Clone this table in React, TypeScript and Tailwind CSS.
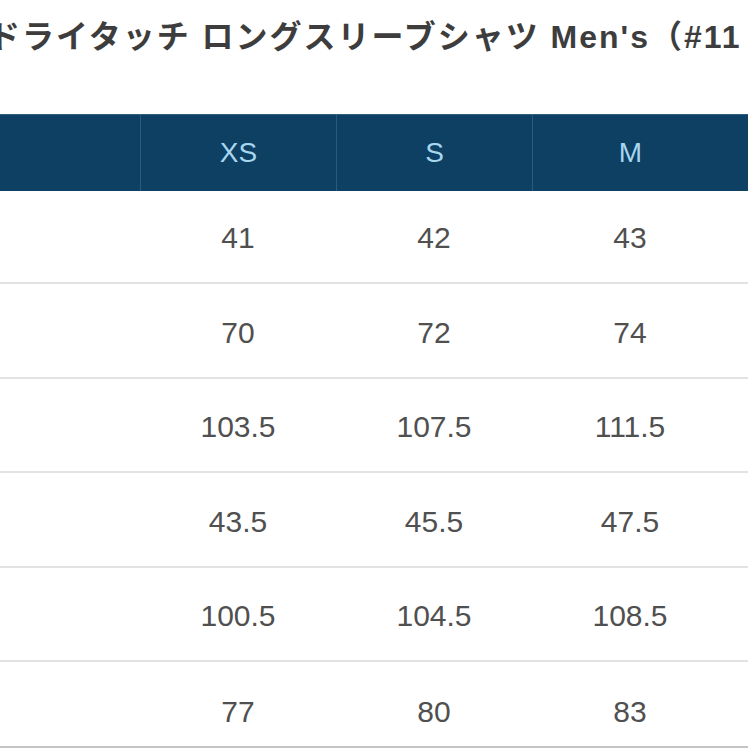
const sizes = ['', 'XS', 'S', 'M', ''];

const rows = [
  ['', '41', '42', '43', ''],
  ['', '70', '72', '74', ''],
  ['', '103.5', '107.5', '111.5', ''],
  ['', '43.5', '45.5', '47.5', ''],
  ['', '100.5', '104.5', '108.5', ''],
  ['', '77', '80', '83', ''],
];

export default function App() {
  return (
    <div className="w-[748px] h-[748px] overflow-hidden bg-white">
      {/* Title */}
      <div className="h-[114px] pt-[18px] overflow-hidden">
        <h1
          className="ml-[-12px] whitespace-nowrap text-[32px] leading-[38px] font-bold tracking-[2px] text-[#3d3d3d]"
          style={{ fontFamily: '"Liberation Sans", "Noto Sans CJK JP", sans-serif' }}
        >
          ドライタッチ ロングスリーブシャツ Men's（#11
        </h1>
      </div>

      {/* Size table */}
      <div
        className="ml-[-56px] w-[980px]"
        style={{ fontFamily: '"Liberation Sans", Arial, sans-serif' }}
      >
        <div className="flex h-[77px] bg-[#0d4063] border-t border-[#2d5f80]">
          {sizes.map((s, i) => (
            <div
              key={i}
              className={
                'w-[196px] flex items-center justify-center text-[28px] text-[#a8d6ef] ' +
                (i > 0 && i < 4 ? 'border-l border-[#2a5b7c]' : '')
              }
            >
              {s}
            </div>
          ))}
        </div>

        {rows.map((row, r) => (
          <div
            key={r}
            className={
              'flex border-b-2 ' +
              (r === 0
                ? 'h-[93px] pt-[2px] border-[#e2e2e2]'
                : r === rows.length - 1
                  ? 'h-[86px] pt-[14px] border-[#c4c4c4]'
                  : 'h-[94.5px] pt-[4px] border-[#e2e2e2]')
            }
          >
            {row.map((v, i) => (
              <div
                key={i}
                className="w-[196px] flex items-center justify-center text-[30px] text-[#505050]"
              >
                {v}
              </div>
            ))}
          </div>
        ))}
      </div>
    </div>
  );
}
